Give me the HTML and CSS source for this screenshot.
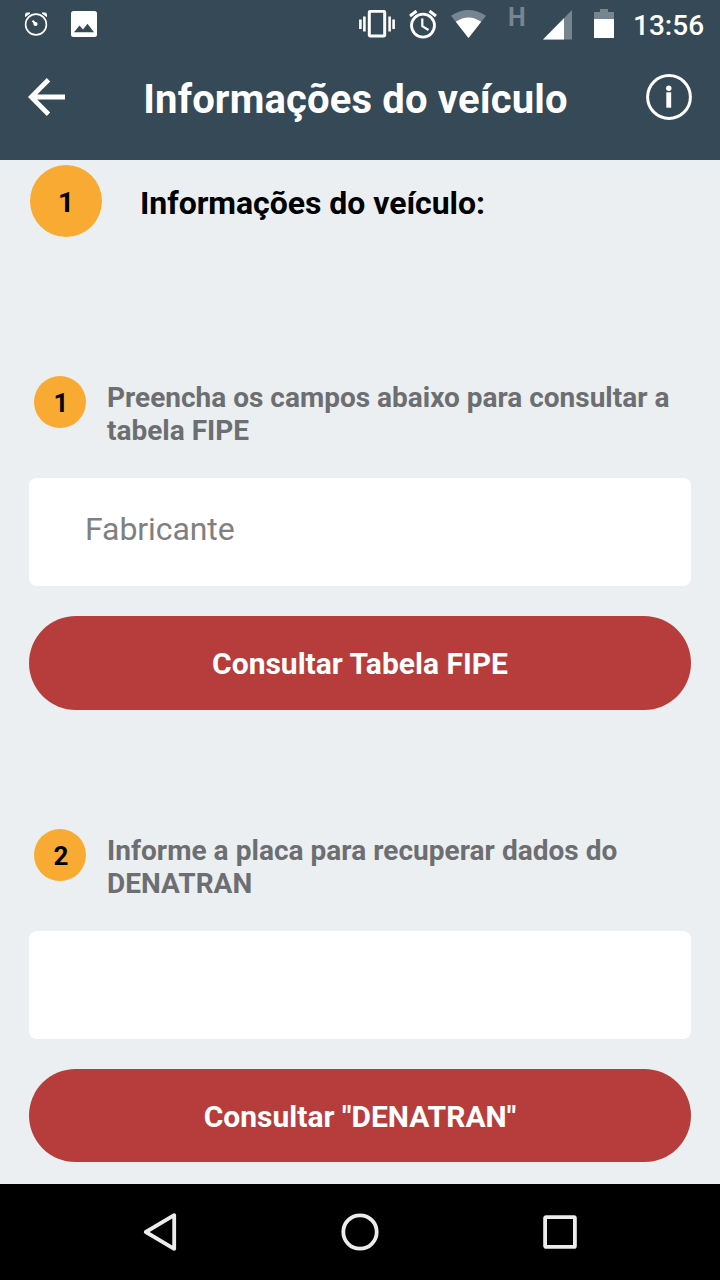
FILE: index.html
```html
<!DOCTYPE html>
<html lang="pt-BR">
<head>
<meta charset="utf-8">
<meta name="viewport" content="width=device-width">
<title>Informações do veículo</title>
<link rel="stylesheet" href="styles.css">
</head>
<body>
<div class="screen">
  <div class="status-bar">
    <div class="status-group">
      <svg class="icon" width="24" height="26" viewBox="0 0 24 26" fill="none" stroke="#fff">
        <circle cx="12" cy="13.5" r="10.4" stroke-width="1.6"/>
        <path d="M1.5 5.5V3.5Q1.5 2 3 2H6L1.5 5.5ZM22.5 5.5V3.5Q22.5 2 21 2H18L22.5 5.5Z" fill="#fff" stroke-width="1"/>
        <circle cx="11.5" cy="13" r="2.1" fill="#fff" stroke="none"/>
        <path d="M11.5 13L8.6 9.6" stroke-width="2.2"/>
      </svg>
      <svg class="icon" width="26" height="26" viewBox="0 0 26 26">
        <rect width="26" height="26" rx="2.5" fill="#fff"/>
        <path d="M3 21.3L8.5 14.5L12 18.5L16.5 12.8L23 21.3Z" fill="#354956"/>
      </svg>
    </div>
    <div class="status-group status-system">
      <svg class="icon vibrate" width="36" height="28" viewBox="0 0 36 28" fill="none" stroke="#fff" stroke-width="2.6">
        <rect x="10.3" y="1.3" width="15.4" height="24.7" rx="1.2" stroke-width="3"/>
        <path d="M1.4 9.5V19M5.4 6.5V21.5M30.6 6.5V21.5M34.6 9.5V19"/>
      </svg>
      <svg class="icon alarm" width="28" height="29" viewBox="0 0 28 29" fill="none" stroke="#fff">
        <circle cx="14" cy="15.6" r="11.5" stroke-width="2.8"/>
        <path d="M1 6L7.5 1M27 6L20.5 1" stroke-width="3"/>
        <path d="M13.3 8.5V16.2L19.5 20" stroke-width="2.2"/>
      </svg>
      <svg class="icon wifi" width="35" height="28" viewBox="0 0 35 28">
        <path d="M0 5.8Q17.5 -5.8 35 5.8L17.5 28Z" fill="#768590"/>
        <path d="M4.8 11.8Q17.5 3 30.2 11.8L17.5 28Z" fill="#fff"/>
      </svg>
      <span class="network">H</span>
      <svg class="icon signal" width="29" height="30" viewBox="0 0 29 30">
        <path d="M29 0V29.5H0Z" fill="#768590"/>
        <path d="M21 8.2V29.5H0Z" fill="#fff"/>
      </svg>
      <svg class="icon battery" width="20" height="29" viewBox="0 0 20 29">
        <path d="M6 0H14V3H20V10H0V3H6Z" fill="#768590"/>
        <path d="M0 10H20V29H0Z" fill="#fff"/>
      </svg>
      <span class="clock">13:56</span>
    </div>
  </div>

  <header class="app-bar">
    <svg class="back" width="38" height="38" viewBox="0 0 38 38" fill="none" stroke="#fff" stroke-width="4.8">
      <path d="M20.5 1.8L3.3 19L20.5 36.2M3.3 19H37"/>
    </svg>
    <h1 class="title">Informações do veículo</h1>
    <svg class="info" width="46" height="46" viewBox="0 0 46 46">
      <circle cx="23" cy="23" r="21.4" fill="none" stroke="#fff" stroke-width="3"/>
      <circle cx="22.8" cy="14.2" r="2.7" fill="#fff"/>
      <path d="M20.3 18.3H25.2V33.7H20.3Z" fill="#fff"/>
    </svg>
  </header>

  <main class="content">
    <div class="section-head">
      <span class="badge badge-large">1</span>
      <h2 class="section-title">Informações do veículo:</h2>
    </div>

    <section class="step">
      <div class="step-head">
        <span class="badge">1</span>
        <p class="step-text">Preencha os campos abaixo para consultar a<br>tabela FIPE</p>
      </div>
      <input class="field" type="text" placeholder="Fabricante">
      <button class="action">Consultar Tabela FIPE</button>
    </section>

    <section class="step">
      <div class="step-head">
        <span class="badge">2</span>
        <p class="step-text step-text-plate">Informe a placa para recuperar dados do<br>DENATRAN</p>
      </div>
      <input class="field" type="text">
      <button class="action action-plate">Consultar "DENATRAN"</button>
    </section>
  </main>

  <nav class="nav-bar">
    <svg width="40" height="40" viewBox="0 0 40 40"><path d="M5.8 20L34.2 3.2V36.8Z"/></svg>
    <svg width="40" height="40" viewBox="0 0 40 40"><circle cx="20" cy="20" r="16.7"/></svg>
    <svg width="40" height="40" viewBox="0 0 40 40"><rect x="5.1" y="5.1" width="29.8" height="29.8" rx="1"/></svg>
  </nav>
</div>
</body>
</html>
```
FILE: styles.css
```css
* { box-sizing: border-box; margin: 0; padding: 0; }

body {
  font-family: Roboto, "Liberation Sans", sans-serif;
  background: #ebeff2;
}

.screen {
  width: 720px;
  height: 1280px;
  display: flex;
  flex-direction: column;
  overflow: hidden;
}

.status-bar {
  height: 48px;
  flex: none;
  display: flex;
  justify-content: space-between;
  padding: 0 16px 0 24px;
  background: #354956;
  color: #fff;
}

.status-group { display: flex; align-items: flex-start; gap: 23px; }
.status-group .icon { flex: none; margin-top: 11px; }
.status-system { gap: 0; }
.status-system .vibrate { margin: 10px 14px 0 0; }
.status-system .alarm { margin: 10px 14px 0 0; }
.status-system .wifi { margin: 10px 22px 0 0; }
.status-system .signal { margin: 10px 22px 0 0; }
.status-system .battery { margin: 9px 19px 0 0; }

.network {
  width: 18px;
  margin: 4px 17px 0 0;
  font-size: 25px;
  line-height: 28px;
  font-weight: 700;
  color: #768590;
}

.clock {
  width: 71px;
  margin-top: 9px;
  font-size: 28px;
  line-height: 33px;
  font-weight: 500;
  white-space: nowrap;
}

.app-bar {
  height: 112px;
  flex: none;
  display: flex;
  align-items: flex-start;
  justify-content: space-between;
  padding: 0 28px;
  background: #354956;
  color: #fff;
}

.back { margin-top: 30px; }
.info { margin-top: 26px; }

.title {
  margin: 28px 1px 0 0;
  font-size: 40px;
  line-height: 47px;
  font-weight: 700;
  letter-spacing: 0.15px;
}

.content {
  flex: 1;
  min-height: 0;
  overflow: hidden;
  padding: 5px 29px 0;
}

.section-head {
  display: flex;
  align-items: center;
  gap: 38px;
  height: 72px;
  margin: 0 0 139px 1px;
}

.section-title {
  padding-top: 3px;
  font-size: 32px;
  line-height: 38px;
  font-weight: 700;
  letter-spacing: -0.04px;
  color: #000;
}

.badge {
  flex: none;
  width: 52px;
  height: 52px;
  display: flex;
  align-items: center;
  justify-content: center;
  padding: 2px 0 0 2px;
  border-radius: 50%;
  background: #f9aa33;
  color: #000;
  font-size: 26px;
  font-weight: 700;
}

.badge-large { width: 72px; height: 72px; padding-left: 0; font-size: 28px; }

.step { height: 453px; }

.step-head {
  display: flex;
  gap: 21px;
  height: 102px;
  padding-left: 5px;
}

.step-text {
  padding-top: 5px;
  font-size: 28px;
  line-height: 33px;
  font-weight: 700;
  color: #6d6e71;
  white-space: nowrap;
}

.step-text-plate { letter-spacing: 0.04px; }

.field {
  display: block;
  width: 100%;
  height: 108px;
  margin-bottom: 30px;
  padding: 0 56px 6px;
  border: 0;
  border-radius: 8px;
  background: #fff;
  font: 400 32px Roboto, "Liberation Sans", sans-serif;
}

.field::placeholder { color: #808080; opacity: 1; letter-spacing: -0.08px; }

.action {
  display: block;
  width: 100%;
  height: 94px;
  border: 0;
  border-radius: 47px;
  background: #b73d3d;
  color: #fff;
  font: 700 30px Roboto, "Liberation Sans", sans-serif;
}

.action-plate { height: 93px; padding-top: 1px; }

.nav-bar {
  height: 96px;
  flex: none;
  display: flex;
  align-items: center;
  justify-content: center;
  gap: 160px;
  background: #000;
}

.nav-bar svg { fill: none; stroke: #ececec; stroke-width: 3.8; stroke-linejoin: round; }
```
